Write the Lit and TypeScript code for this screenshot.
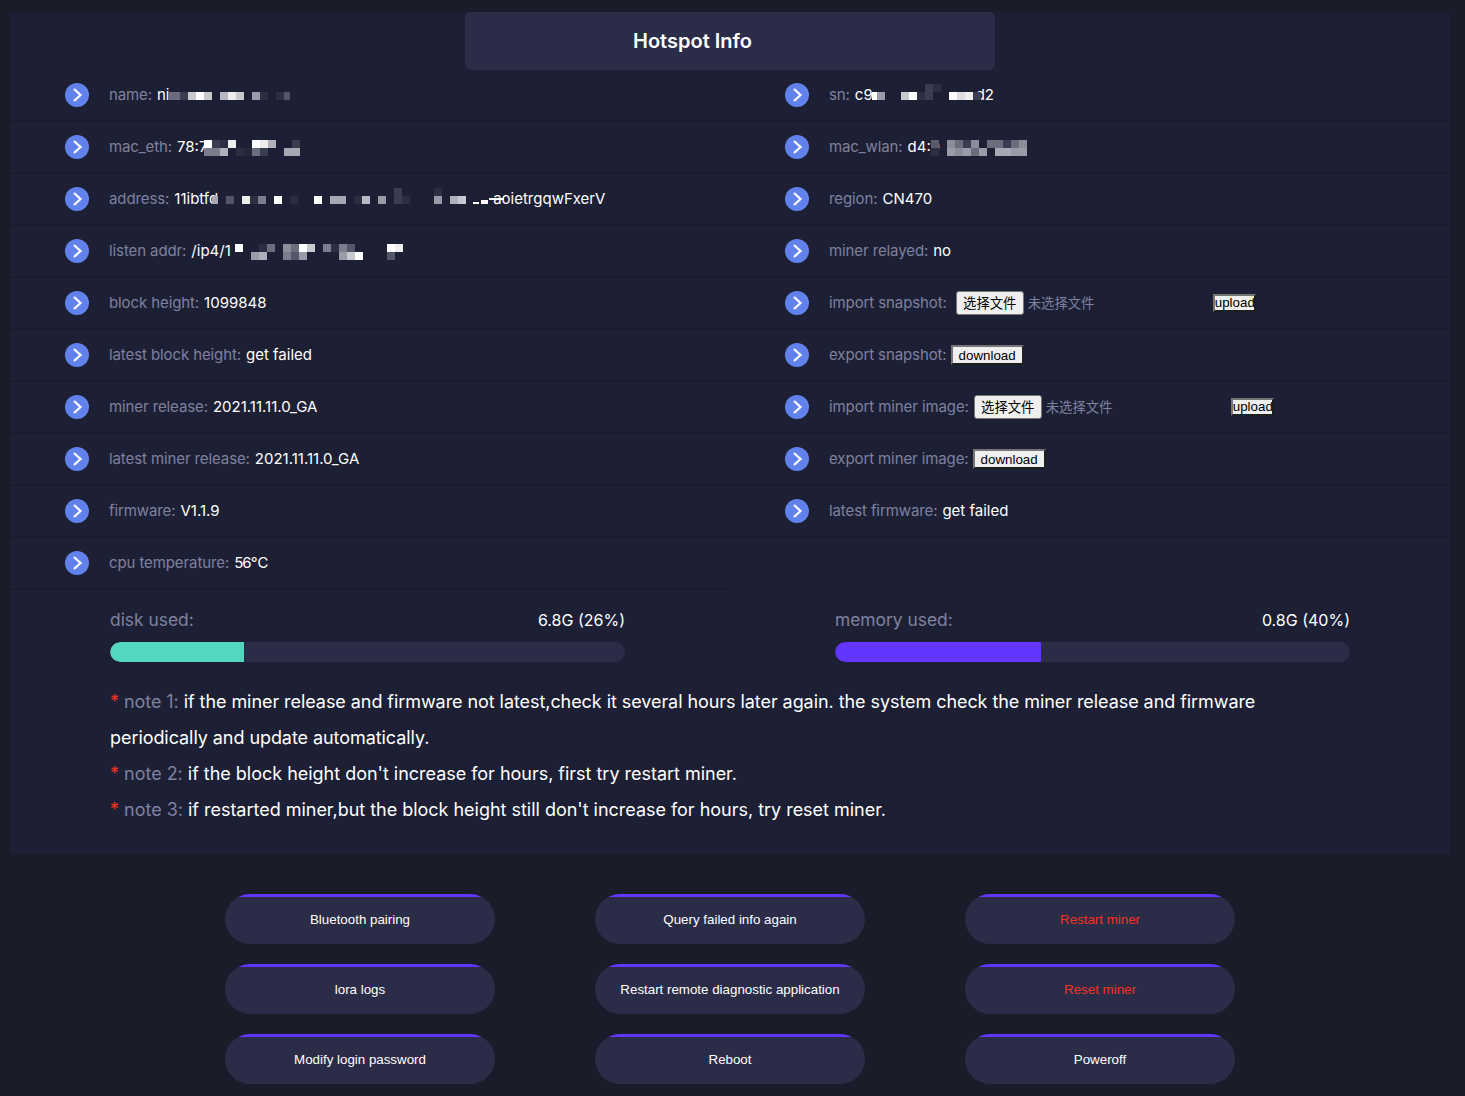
import { LitElement, html, css, svg } from "lit";
import { customElement } from "lit/decorators.js";

type Cell = [number, number, string, number?, number?];

/* Pixelated redaction block; cells use page x and a y relative to the row's text centre box. */
const mosaic = (x0: number, w: number, cells: Cell[], ml = 0, mr = 0) =>
  html`<svg class="mosaic" width=${w} height="24" viewBox="0 0 ${w} 24" style="margin-left:${ml}px;margin-right:${mr}px">${cells.map(
    ([x, y, c, cw, ch]) => svg`<rect x=${x - x0} y=${y} width=${cw ?? 8} height=${ch ?? 8} fill=${c}></rect>`
  )}</svg>`;

const line = (y: number, cells: [number, string][]): Cell[] => cells.map(([x, c]) => [x, y, c]);

@customElement("app-root")
export class AppRoot extends LitElement {
  static styles = css`
    :host { display: block; background: #1a1c29; height: 1096px; padding: 12px 15px 0 10px; box-sizing: border-box; font-family: Inter, "Noto Sans CJK SC", sans-serif; color: #fff; overflow: hidden; }
    .panel { background: #1d2034; height: 842px; }
    .head { width: 530px; height: 58px; margin: 0 auto; background: #2b2c48; border-radius: 6px; box-sizing: border-box; padding-left: 168px; font-size: 20px; font-weight: 600; line-height: 58px; }
    .grid { display: grid; grid-template-columns: 720px 720px; }
    .cell { height: 52px; box-sizing: border-box; border-bottom: 2px solid #191b2b; display: flex; align-items: center; padding-left: 55px; font-size: 15px; white-space: nowrap; }
    .ic { width: 24px; height: 24px; margin-right: 20px; flex: none; }
    .k { color: #7e81a0; margin: 0 5px 2px 0; letter-spacing: -0.1px; }
    .v { color: #fff; display: inline-flex; align-items: center; margin-bottom: 2px; }
    .tight { letter-spacing: -0.9px; }
    .mosaic { display: block; flex: none; z-index: 1; }
    .choose { font: 13.33px "Noto Sans CJK SC", sans-serif; background: #efefef; color: #000; border: 1px solid #767676; border-radius: 3px; height: 24px; width: 68px; padding: 0 0 2px; box-sizing: border-box; }
    .gap-wide { margin-left: 4px; }
    .gap-narrow { margin-left: 0; }
    .none { color: #7e81a0; font: 13.33px "Noto Sans CJK SC", sans-serif; margin: 0 0 2px 4px; width: 185px; }
    .up, .dl { font: 13.33px "Liberation Sans", sans-serif; background: #efefef; color: #000; padding: 0; box-sizing: border-box; border: 2px solid; border-color: #767676 #1f1f1f #1f1f1f #767676; overflow: visible; }
    .up { width: 43px; height: 18px; line-height: 14px; }
    .dl { width: 73px; height: 20px; margin-left: -1px; }
    .bars { display: flex; padding: 0 0 0 100px; gap: 210px; margin-top: 18px; }
    .bar { width: 515px; }
    .bar-top { display: flex; justify-content: space-between; font-size: 16px; line-height: 24px; }
    .bar-top span:first-child { font-size: 17.4px; color: #7e81a0; }
    .track { height: 20px; background: #2b2c48; border-radius: 10px; overflow: hidden; margin-top: 10px; }
    .fill { height: 100%; border-radius: 10px 0 0 10px; }
    .notes { padding: 22px 170px 0 100px; font-size: 18px; line-height: 36px; letter-spacing: -0.02px; }
    .notes .first { letter-spacing: -0.065px; }
    .notes i { color: #f5321e; font-style: normal; }
    .notes b { color: #7e81a0; font-weight: 400; }
    .btns { display: grid; grid-template-columns: repeat(3, 270px); gap: 20px 100px; justify-content: center; margin: 40px 0 0; }
    .btn { height: 50px; border-radius: 25px; background: #2b2c48; color: #fff; font: 13.33px/52px "Liberation Sans", sans-serif; text-align: center; position: relative; overflow: hidden; }
    .btn::before { content: ""; position: absolute; left: 0; right: 0; top: 0; height: 3px; background: #6236ff; }
    .red { color: #f5321e; }
  `;

  private icon() {
    return html`<svg class="ic" viewBox="0 0 24 24"><circle cx="12" cy="12" r="12" fill="#6182ec"></circle><path d="M9 6l6.5 6L9 18" fill="none" stroke="#fff" stroke-width="2.2"></path></svg>`;
  }

  private cell(k: string, v: unknown) {
    return html`<div class="cell">${this.icon()}<span class="k">${k}</span><span class="v">${v}</span></div>`;
  }

  private file(k: string, gap: string) {
    return html`<div class="cell">${this.icon()}<span class="k">${k}</span><button class="choose ${gap}">选择文件</button><span class="none">未选择文件</span><button class="up">upload</button></div>`;
  }

  private dl(k: string) {
    return html`<div class="cell">${this.icon()}<span class="k">${k}</span><button class="dl">download</button></div>`;
  }

  render() {
    const name = mosaic(168, 124, [
      [168, 10, "#6a6b7c", 4, 8],
      ...line(10, [[172, "#6a6b7c"], [180, "#3a3c50"], [188, "#c8c8d0"], [196, "#fff"], [204, "#c8c8d0"], [220, "#b8b8c4"], [228, "#eee"], [236, "#c8c8d0"], [252, "#9a9aa8"], [260, "#2c2e42"], [276, "#2c2e42"]]),
      [284, 10, "#55566a", 6, 8],
    ], -2);
    const sn = mosaic(871, 109, [
      [871, 10, "#fff", 5, 8],
      ...line(10, [[876, "#9a9aa8"], [900, "#c8c8d0"], [908, "#fff"], [916, "#2c2e42"], [924, "#3a3c50"], [948, "#fff"], [956, "#ddd"], [964, "#eee"], [972, "#3a3c50"]]),
      ...line(2, [[924, "#3a3c50"], [932, "#2c2e42"]]),
    ], -1, -5);
    const eth = mosaic(204, 96, [
      ...line(6, [[204, "#fff"], [212, "#3a3c50"], [220, "#2c2e42"], [228, "#eee"], [252, "#fff"], [260, "#eee"], [268, "#b0b0bc"], [292, "#3a3c50"]]),
      ...line(14, [[204, "#7c7d8c"], [212, "#7c7d8c"], [220, "#b0b0bc"], [236, "#2c2e42"], [244, "#242638"], [252, "#6c6d7c"], [260, "#3a3c50"], [284, "#a8a8b4"], [292, "#a8a8b4"]]),
    ], -12);
    const wlan = mosaic(932, 96, [
      ...line(6, [[932, "#5a5b6c"], [948, "#8c8c9a"], [956, "#6c6d7c"], [964, "#3a3c50"], [972, "#8c8c9a"], [988, "#6c6d7c"], [996, "#6c6d7c"], [1004, "#3a3c50"], [1012, "#6c6d7c"], [1020, "#8c8c9a"]]),
      ...line(14, [[932, "#2c2e42"], [948, "#9a9aa8"], [956, "#8c8c9a"], [964, "#9a9aa8"], [972, "#6c6d7c"], [980, "#9a9aa8"], [996, "#a8a8b4"], [1004, "#a8a8b4"], [1012, "#9a9aa8"], [1020, "#9a9aa8"]]),
    ], -9);
    const addr = mosaic(214, 293, [
      [214, 10, "#a8a8b4", 6, 8],
      ...line(10, [[228, "#55566a"], [244, "#eee"], [252, "#2c2e42"], [260, "#7c7d8c"], [276, "#fff"], [292, "#2c2e42"], [316, "#fff"], [332, "#a8a8b4"], [340, "#a8a8b4"], [356, "#2c2e42"], [364, "#b8b8c4"], [380, "#9a9aa8"], [396, "#3a3c50"], [404, "#2c2e42"], [436, "#9a9aa8"], [452, "#b0b0bc"], [460, "#c8c8d0"]]),
      ...line(2, [[396, "#3a3c50"], [436, "#2c2e42"]]),
      [475, 16, "#fff", 6, 2],
      [483, 14, "#fff", 7, 4],
      [491, 12, "#fff", 15, 2],
    ], -6, -12);
    const listen = mosaic(235, 169, [
      ...line(6, [[236, "#fff"], [260, "#2c2e42"], [268, "#6c6d7c"], [284, "#8c8c9a"], [292, "#6c6d7c"], [300, "#fff"], [308, "#c8c8d0"], [324, "#7c7d8c"], [332, "#2c2e42"], [340, "#7c7d8c"], [348, "#55566a"], [388, "#fff"], [396, "#eee"]]),
      ...line(14, [[252, "#9a9aa8"], [260, "#b0b0bc"], [284, "#7c7d8c"], [292, "#55566a"], [300, "#9a9aa8"], [340, "#9a9aa8"], [348, "#c8c8d0"], [356, "#fff"], [388, "#55566a"]]),
    ], 3);
    return html`
      <div class="panel">
        <div class="head">Hotspot Info</div>
        <div class="grid">
          ${this.cell("name:", html`ni${name}`)}
          ${this.cell("sn:", html`c9${sn}d2`)}
          ${this.cell("mac_eth:", html`78:74${eth}`)}
          ${this.cell("mac_wlan:", html`d4:9${wlan}`)}
          ${this.cell("address:", html`11ibtfd${addr}aoietrgqwFxerV`)}
          ${this.cell("region:", "CN470")}
          ${this.cell("listen addr:", html`/ip4/1${listen}`)}
          ${this.cell("miner relayed:", "no")}
          ${this.cell("block height:", "1099848")}
          ${this.file("import snapshot:", "gap-wide")}
          ${this.cell("latest block height:", "get failed")}
          ${this.dl("export snapshot:")}
          ${this.cell("miner release:", "2021.11.11.0_GA")}
          ${this.file("import miner image:", "gap-narrow")}
          ${this.cell("latest miner release:", "2021.11.11.0_GA")}
          ${this.dl("export miner image:")}
          ${this.cell("firmware:", "V1.1.9")}
          ${this.cell("latest firmware:", "get failed")}
          ${this.cell("cpu temperature:", html`<span class="tight">56℃</span>`)}
        </div>
        <div class="bars">
          <div class="bar">
            <div class="bar-top"><span>disk used:</span><span>6.8G (26%)</span></div>
            <div class="track"><div class="fill" style="width:26%;background:#55d6be"></div></div>
          </div>
          <div class="bar">
            <div class="bar-top"><span>memory used:</span><span>0.8G (40%)</span></div>
            <div class="track"><div class="fill" style="width:40%;background:#6236ff"></div></div>
          </div>
        </div>
        <div class="notes">
          <div class="first"><i>*</i> <b>note 1:</b> if the miner release and firmware not latest,check it several hours later again. the system check the miner release and firmware periodically and update automatically.</div>
          <div><i>*</i> <b>note 2:</b> if the block height don't increase for hours, first try restart miner.</div>
          <div><i>*</i> <b>note 3:</b> if restarted miner,but the block height still don't increase for hours, try reset miner.</div>
        </div>
      </div>
      <div class="btns">
        <div class="btn">Bluetooth pairing</div>
        <div class="btn">Query failed info again</div>
        <div class="btn red">Restart miner</div>
        <div class="btn">lora logs</div>
        <div class="btn">Restart remote diagnostic application</div>
        <div class="btn red">Reset miner</div>
        <div class="btn">Modify login password</div>
        <div class="btn">Reboot</div>
        <div class="btn">Poweroff</div>
      </div>
    `;
  }
}
